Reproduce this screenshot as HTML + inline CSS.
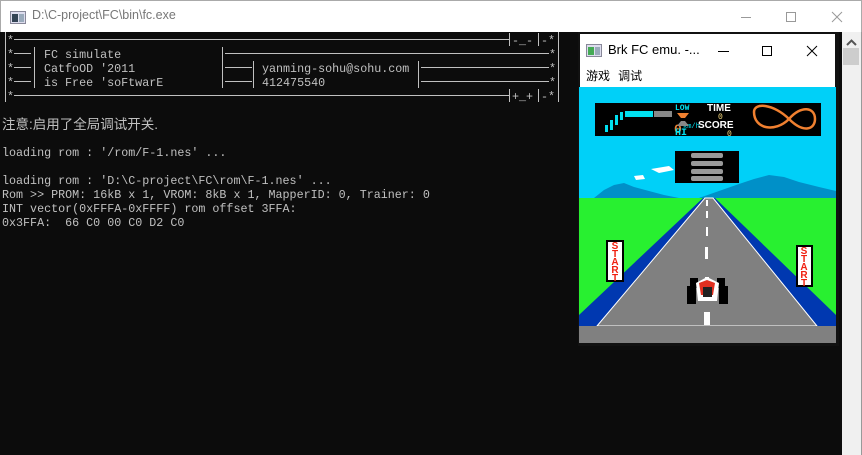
<!DOCTYPE html>
<html><head><meta charset="utf-8"><style>
*{margin:0;padding:0;box-sizing:border-box}
body{width:862px;height:455px;overflow:hidden;background:#0c0c0c;position:relative;font-family:"Liberation Mono",monospace}
.tb{position:absolute;left:0;top:0;width:862px;height:32px;background:#fff;border:1px solid #aaa;border-bottom:none}
.t{position:absolute;white-space:pre;color:#c0c0c0;font-size:11.7px;line-height:14px;left:2px}
.sb{position:absolute;left:842px;top:32px;width:19px;height:423px;background:#f0f0f0}
</style></head><body>
<div class="tb">
 <svg style="position:absolute;left:9px;top:10px" width="16" height="13"><rect x="0.5" y="0.5" width="15" height="12" fill="#dde" stroke="#889"/><rect x="2" y="3" width="6" height="8" fill="#345"/><rect x="9" y="3" width="5" height="8" fill="#9ab"/></svg>
 <div style="position:absolute;left:31px;top:7px;font-family:'Liberation Sans',sans-serif;font-size:12.5px;color:#777">D:\C-project\FC\bin\fc.exe</div>
 <svg style="position:absolute;left:730px;top:8px" width="120" height="18" stroke="#999" fill="none" stroke-width="1"><line x1="10" y1="8.5" x2="20" y2="8.5"/><rect x="55.5" y="3.5" width="9" height="9"/><path d="M101 3 L111 13 M111 3 L101 13"/></svg>
</div>
<svg style="position:absolute;left:0;top:32px" width="580" height="75" stroke="#c0c0c0" stroke-width="1" fill="#c0c0c0" font-family="Liberation Mono,monospace" font-size="11.7">
 <line x1="5.5" y1="0" x2="5.5" y2="70"/><line x1="558.5" y1="0" x2="558.5" y2="70"/>
 <text x="7" y="12" stroke="none">*</text><line x1="14" y1="7.5" x2="509" y2="7.5"/><line x1="509.5" y1="1" x2="509.5" y2="14"/><text x="512" y="12" stroke="none">-_-</text><line x1="538.5" y1="1" x2="538.5" y2="14"/><text x="541" y="12" stroke="none">-*</text>
 <text x="7" y="26" stroke="none">*</text><line x1="14" y1="21.5" x2="31" y2="21.5"/>
 <text x="7" y="40" stroke="none">*</text><line x1="14" y1="35.5" x2="31" y2="35.5"/>
 <text x="7" y="54" stroke="none">*</text><line x1="14" y1="49.5" x2="31" y2="49.5"/>
 <line x1="34.5" y1="15" x2="34.5" y2="56"/>
 <text x="44" y="26" stroke="none">FC simulate</text><text x="44" y="40" stroke="none">CatfoOD '2011</text><text x="44" y="54" stroke="none">is Free 'soFtwarE</text>
 <line x1="222.5" y1="15" x2="222.5" y2="56"/><line x1="225" y1="21.5" x2="549" y2="21.5"/><text x="549" y="26" stroke="none">*</text>
 <line x1="225" y1="35.5" x2="252" y2="35.5"/><line x1="225" y1="49.5" x2="252" y2="49.5"/><line x1="253.5" y1="29" x2="253.5" y2="56"/>
 <text x="262" y="40" stroke="none">yanming-sohu@sohu.com</text><text x="262" y="54" stroke="none">412475540</text>
 <line x1="418.5" y1="29" x2="418.5" y2="56"/><line x1="421" y1="35.5" x2="549" y2="35.5"/><text x="549" y="40" stroke="none">*</text><line x1="421" y1="49.5" x2="549" y2="49.5"/><text x="549" y="54" stroke="none">*</text>
 <text x="7" y="68" stroke="none">*</text><line x1="14" y1="63.5" x2="509" y2="63.5"/><line x1="509.5" y1="57" x2="509.5" y2="70"/><text x="512" y="68" stroke="none">+_+</text><line x1="538.5" y1="57" x2="538.5" y2="70"/><text x="541" y="68" stroke="none">-*</text>
</svg>
<div class="t" style="top:116px;font-family:'Liberation Sans','Noto Sans CJK SC',sans-serif;font-size:13.5px;line-height:18px">注意:启用了全局调试开关.</div>
<div class="t" style="top:146px">loading rom : '/rom/F-1.nes' ...

loading rom : 'D:\C-project\FC\rom\F-1.nes' ...
Rom >> PROM: 16kB x 1, VROM: 8kB x 1, MapperID: 0, Trainer: 0
INT vector(0xFFFA-0xFFFF) rom offset 3FFA:
0x3FFA:  66 C0 00 C0 D2 C0</div>
<div class="sb"><svg style="position:absolute;left:4px;top:7px" width="11" height="8"><path d="M1 6 L5.5 1.5 L10 6" stroke="#555" stroke-width="2" fill="none"/></svg><div style="position:absolute;left:1px;top:16px;width:16px;height:17px;background:#cdcdcd"></div></div>
<div style="position:absolute;left:578px;top:32px;width:261px;height:314px;background:#111"></div>
<div style="position:absolute;left:580px;top:34px;width:255px;height:53px;background:#fff">
 <svg style="position:absolute;left:6px;top:10px" width="16" height="13"><rect x="0.5" y="0.5" width="15" height="12" fill="#dde" stroke="#889"/><rect x="2" y="3" width="6" height="8" fill="#4a5"/><rect x="9" y="3" width="5" height="8" fill="#9ab"/></svg>
 <div style="position:absolute;left:28px;top:8px;font-family:'Liberation Sans',sans-serif;font-size:13px;color:#000">Brk FC emu. -...</div>
 <svg style="position:absolute;left:130px;top:8px" width="125" height="18" stroke="#000" fill="none"><line x1="8" y1="9.5" x2="19" y2="9.5"/><rect x="52.5" y="4.5" width="9" height="9"/><path d="M97 4 L107 14 M107 4 L97 14"/></svg>
 <div style="position:absolute;left:6px;top:34px;font-family:'Noto Sans CJK SC',sans-serif;font-size:12px;line-height:16px;color:#000">游戏&nbsp;&nbsp;&nbsp;调试</div>
</div>
<svg style="position:absolute;left:579px;top:87px" width="257" height="256">
 <rect width="257" height="256" fill="#00d0f8"/>
 <path d="M15 111 L25 103 L35 98 L45 96 L55 100 L70 104 L85 108 L100 111 Z M120 111 L140 104 L160 97 L175 92 L190 88 L205 90 L220 95 L240 100 L257 104 L257 111 Z" fill="#0090c8"/>
 <rect y="111" width="257" height="128" fill="#28f030"/>
 <path d="M0 228 L124 111 L136 111 L257 228 L257 241 L0 241 Z" fill="#0038b0"/>
 <path d="M18 239 L126 111 L134 111 L238 239 Z" fill="#808080" stroke="#fff" stroke-width="1"/>
 <rect y="239" width="257" height="17" fill="#808080"/>
 <g fill="#fff"><rect x="127" y="113" width="2" height="6"/><rect x="127" y="124" width="2" height="7"/><rect x="127" y="140" width="2" height="9"/><rect x="126" y="160" width="3" height="12"/><rect x="126" y="190" width="4" height="18"/><rect x="125" y="225" width="6" height="13"/></g>
 <rect x="16" y="16" width="226" height="33" fill="#000"/>
 <g fill="#00e0f0"><rect x="26" y="38" width="3" height="7"/><rect x="31" y="33" width="3" height="10"/><rect x="36" y="28" width="3" height="10"/><rect x="41" y="25" width="3" height="8"/><rect x="46" y="24" width="28" height="6"/></g>
 <rect x="75" y="24" width="18" height="6" fill="#888"/>
 <text x="95" y="46" fill="#f08030" font-size="13" font-weight="bold" font-family="Liberation Mono">0</text>
 <text x="104" y="41" fill="#00e0f0" font-size="7" font-family="Liberation Mono">km/h</text>
 <text x="96" y="23" fill="#00e0f0" font-size="8" font-weight="bold" font-family="Liberation Mono">LOW</text>
 <path d="M98 26 L110 26 L106 31 L102 31Z" fill="#f08030"/><path d="M102 34 L106 34 L110 39 L98 39Z" fill="#888"/>
 <text x="96" y="48" fill="#00e0f0" font-size="10" font-weight="bold" font-family="Liberation Mono">HI</text>
 <text x="128" y="24" fill="#fff" font-size="10" font-weight="bold" font-family="Liberation Sans">TIME</text>
 <text x="139" y="32" fill="#ffe080" font-size="8" font-family="Liberation Mono">0</text>
 <text x="119" y="41" fill="#fff" font-size="10" font-weight="bold" font-family="Liberation Sans">SCORE</text>
 <text x="148" y="49" fill="#ffe080" font-size="8" font-family="Liberation Mono">0</text>
 <path d="M175 25 C175 15 195 17 210 32 C225 47 236 42 236 32 C236 20 222 18 210 32 C196 46 175 42 175 25Z" fill="none" stroke="#f08030" stroke-width="2.5"/>
 <rect x="96" y="64" width="64" height="32" fill="#000"/>
 <g fill="#999"><rect x="112" y="66" width="32" height="5" rx="2"/><rect x="112" y="74" width="32" height="5" rx="2"/><rect x="112" y="82" width="32" height="5" rx="2"/><rect x="112" y="89" width="32" height="5" rx="2"/></g>
 <path d="M72 82 L90 79 L95 83 L80 86Z M55 89 L64 88 L66 92 L57 93Z" fill="#fff"/>
 <g font-family="Liberation Sans" font-weight="bold" font-size="10" fill="#f02010" text-anchor="middle">
  <rect x="28" y="154" width="16" height="40" fill="#fff" stroke="#000" stroke-width="2"/>
  <text x="36" y="162">S</text><text x="36" y="170">T</text><text x="36" y="178">A</text><text x="36" y="186">R</text><text x="36" y="194">T</text>
  <rect x="218" y="159" width="15" height="40" fill="#fff" stroke="#000" stroke-width="2"/>
  <text x="225" y="167">S</text><text x="225" y="175">T</text><text x="225" y="183">A</text><text x="225" y="191">R</text><text x="225" y="199">T</text>
 </g>
 <rect x="108" y="199" width="9" height="18" fill="#000"/><rect x="140" y="199" width="9" height="18" fill="#000"/>
 <rect x="111" y="191" width="8" height="10" fill="#000"/><rect x="138" y="191" width="8" height="10" fill="#000"/>
 <path d="M117 196 L128 190 L140 196 L138 214 L119 214Z" fill="#fff"/>
 <path d="M120 196 L128 193 L136 196 L134 208 L122 208Z" fill="#e03020"/>
 <rect x="124" y="200" width="9" height="10" fill="#222"/>
</svg>
<div style="position:absolute;left:861px;top:32px;width:1px;height:423px;background:#999"></div>
</body></html>
